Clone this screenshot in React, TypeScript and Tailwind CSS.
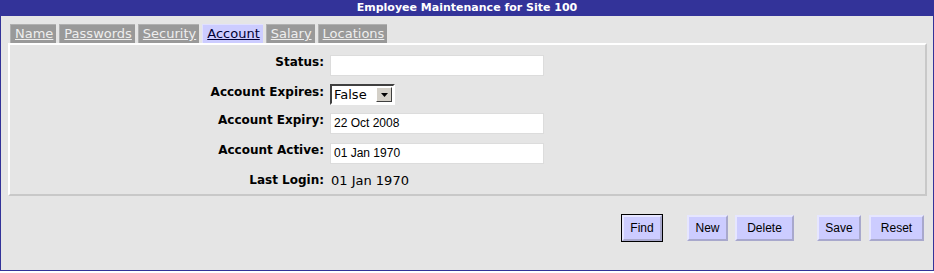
import React from "react";

const verdana = { fontFamily: '"DejaVu Sans", Verdana, sans-serif' };

function Tab({ label, active }: { label: string; active?: boolean }) {
  return (
    <div
      className={
        "h-[19px] pl-[4px] pr-[3px] flex items-center text-[13px] underline border-t border-l " +
        (active
          ? "bg-[#ccccff] text-[#000033] border-[#e0e0ff]"
          : "bg-[#999999] text-[#eeeeee] border-[#b0b0b0]")
      }
    >
      {label}
    </div>
  );
}

function TextInput({ value }: { value: string }) {
  return (
    <div
      className="w-[214px] h-[21px] bg-white border border-[#dcdcdc] flex items-center pl-[3px] text-[12px] text-black"
      style={{ fontFamily: '"Liberation Sans", Arial, sans-serif' }}
    >
      {value}
    </div>
  );
}

function Btn({ label, width, focused }: { label: string; width: string; focused?: boolean }) {
  const inner = (
    <div
      className={
        width +
        " h-[26px] bg-[#ccccff] border-2 border-t-[#e6e6ff] border-l-[#e6e6ff] border-b-[#a8a8cc] border-r-[#a8a8cc] flex items-center justify-center text-[12px] text-black"
      }
      style={{ fontFamily: '"Liberation Sans", Arial, sans-serif' }}
    >
      {label}
    </div>
  );
  return focused ? <div className="border border-black">{inner}</div> : inner;
}

export default function App() {
  return (
    <div className="w-[934px] h-[273px] bg-white" style={verdana}>
      <div className="w-[934px] h-[271px] border border-t-0 border-[#333399] bg-[#e5e5e5] flex flex-col">
        <div className="h-[16px] bg-[#333399] text-white font-bold text-[11px] text-center leading-[16px]">
          Employee Maintenance for Site 100
        </div>
        <div className="pl-[7px] pr-[6px] pt-[8px]">
          <div className="flex gap-[3px] pl-[2px]">
            <Tab label="Name" />
            <Tab label="Passwords" />
            <Tab label="Security" />
            <Tab label="Account" active />
            <Tab label="Salary" />
            <Tab label="Locations" />
          </div>
          <div className="h-[153px] border-2 border-t-white border-l-white border-b-[#c8c8c8] border-r-[#c8c8c8] pt-[10px]">
            <div className="grid grid-cols-[314px_auto] gap-x-[6px] items-start text-[12px] leading-[15px] text-black">
              <div className="text-right font-bold">Status:</div>
              <TextInput value="" />

              <div className="text-right font-bold mt-[8px] pt-[1px]">Account Expires:</div>
              <div className="mt-[8px] w-[65px] h-[21px] bg-white border-2 border-t-[#404040] border-l-[#404040] border-b-white border-r-white flex items-center justify-between pl-[2px] pr-[1px]">
                <span className="text-[13px]">False</span>
                <div className="w-[16px] h-[15px] bg-[#d4d0c8] border border-t-white border-l-white border-b-[#404040] border-r-[#404040] flex items-center justify-center">
                  <svg width="7" height="4" viewBox="0 0 7 4">
                    <path d="M0 0H7L3.5 4Z" fill="black" />
                  </svg>
                </div>
              </div>

              <div className="text-right font-bold mt-[8px]">Account Expiry:</div>
              <div className="mt-[8px]">
                <TextInput value="22 Oct 2008" />
              </div>

              <div className="text-right font-bold mt-[9px]">Account Active:</div>
              <div className="mt-[9px]">
                <TextInput value="01 Jan 1970" />
              </div>

              <div className="text-right font-bold mt-[9px]">Last Login:</div>
              <div className="mt-[9px] pl-[1px] text-[13px]">01 Jan 1970</div>
            </div>
          </div>
          <div className="flex justify-end items-center mt-[18px] pr-[3px]">
            <Btn label="Find" width="w-[40px]" focused />
            <div className="w-[24px]" />
            <Btn label="New" width="w-[41px]" />
            <div className="w-[7px]" />
            <Btn label="Delete" width="w-[59px]" />
            <div className="w-[23px]" />
            <Btn label="Save" width="w-[44px]" />
            <div className="w-[8px]" />
            <Btn label="Reset" width="w-[55px]" />
          </div>
        </div>
      </div>
    </div>
  );
}
